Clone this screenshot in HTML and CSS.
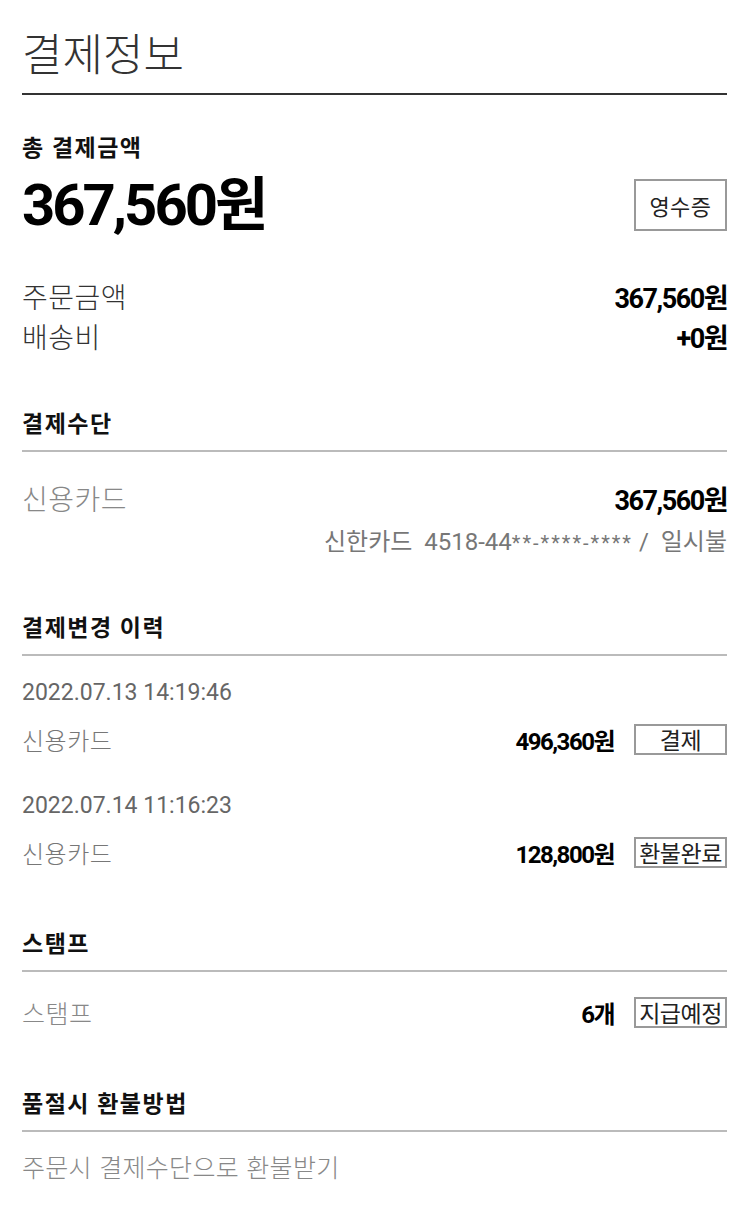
FILE: index.html
```html
<!DOCTYPE html>
<html lang="ko">
<head>
<meta charset="utf-8">
<link rel="stylesheet" href="styles.css">
</head>
<body>
<div class="page">
  <h1 class="title">결제정보</h1>

  <div class="total-label">총 결제금액</div>
  <div class="total-row">
    <div class="total-amount">367,560원</div>
    <div class="btn btn-lg">영수증</div>
  </div>

  <div class="row sum-row"><span class="label dark">주문금액</span><span class="amt">367,560원</span></div>
  <div class="row sum-row tight"><span class="label dark">배송비</span><span class="amt">+0원</span></div>

  <section class="section">
    <h2 class="sec-head">결제수단</h2>
    <div class="row pay-row"><span class="label">신용카드</span><span class="amt">367,560원</span></div>
    <div class="card-info">신한카드 &nbsp;4518-44<span class="mask">**-****-****</span> / &nbsp;일시불</div>
  </section>

  <section class="section">
    <h2 class="sec-head">결제변경 이력</h2>
    <div class="hist">
      <div class="date">2022.07.13 14:19:46</div>
      <div class="row hist-row"><span class="label mid">신용카드</span><span class="right"><span class="amt sm">496,360원</span><span class="btn btn-sm">결제</span></span></div>
    </div>
    <div class="hist">
      <div class="date">2022.07.14 11:16:23</div>
      <div class="row hist-row"><span class="label mid">신용카드</span><span class="right"><span class="amt sm">128,800원</span><span class="btn btn-sm">환불완료</span></span></div>
    </div>
  </section>

  <section class="section sec-stamp">
    <h2 class="sec-head">스탬프</h2>
    <div class="row stamp-row"><span class="label mid2">스탬프</span><span class="right"><span class="amt sm">6개</span><span class="btn btn-sm">지급예정</span></span></div>
  </section>

  <section class="section sec-refund">
    <h2 class="sec-head">품절시 환불방법</h2>
    <div class="refund">주문시 결제수단으로 환불받기</div>
  </section>
</div>
</body>
</html>
```

FILE: styles.css
```css
* { box-sizing: border-box; }
html, body { margin: 0; padding: 0; background: #fff; }
body {
  font-family: "Roboto", "Noto Sans CJK KR", sans-serif;
  color: #111;
}
.page {
  padding: 0 23px 0 22px;
  width: 750px;
}
.title {
  margin: 0;
  padding-top: 28px;
  padding-bottom: 9px;
  font-size: 44px;
  line-height: 56px;
  font-weight: 300;
  color: #333;
  border-bottom: 2px solid #333;
}
.total-label {
  margin-top: 39px;
  font-size: 23px;
  line-height: 30px;
  font-weight: 700;
  letter-spacing: 1.5px;
  color: #111;
}
.total-row {
  margin-top: 14px;
  display: flex;
  justify-content: space-between;
  align-items: center;
  height: 54px;
}
.total-amount {
  font-size: 58px;
  line-height: 54px;
  font-weight: 700;
  letter-spacing: -3px;
  color: #000;
}
.btn {
  display: flex;
  align-items: center;
  justify-content: center;
  border: 2px solid #999;
  background: #fff;
  color: #222;
  font-family: "Noto Sans CJK KR", sans-serif;
  font-weight: 400;
  white-space: nowrap;
}
.btn-lg {
  width: 93px;
  height: 52px;
  font-size: 22px;
  letter-spacing: 0.5px;
}
.btn-sm {
  width: 93px;
  height: 31px;
  font-size: 23px;
  line-height: 1;
  letter-spacing: -0.5px;
}
.row {
  display: flex;
  justify-content: space-between;
  align-items: center;
}
.sum-row {
  margin-top: 46px;
  height: 36px;
}
.sum-row.tight { margin-top: 4px; }
.label {
  font-family: "Noto Sans CJK KR", sans-serif;
  font-size: 28px;
  font-weight: 300;
  letter-spacing: 0.5px;
  color: #888;
}
.label.dark { color: #333; }
.label.mid { font-size: 24px; letter-spacing: 0.5px; color: #777; }
.label.mid2 { font-size: 25px; letter-spacing: 0.5px; color: #888; }
.amt {
  font-size: 27px;
  font-weight: 700;
  letter-spacing: -1.5px;
  color: #000;
}
.amt.sm {
  font-size: 24px;
  letter-spacing: -1.5px;
}
.right {
  display: flex;
  align-items: center;
  gap: 20px;
}
.section { margin-top: 56px; }
.sec-stamp { margin-top: 62px; }
.sec-refund { margin-top: 62px; }
.sec-head {
  margin: 0;
  font-size: 23px;
  line-height: 30px;
  font-weight: 700;
  letter-spacing: 1.5px;
  color: #111;
  padding-bottom: 10px;
  border-bottom: 2px solid #bbb;
}
.pay-row {
  margin-top: 29px;
  height: 34px;
}
.card-info {
  margin-top: 12px;
  text-align: right;
  font-size: 24px;
  line-height: 30px;
  color: #777;
  font-weight: 400;
}
.mask { font-size: 20px; letter-spacing: 2px; }
.hist { margin-top: 22px; }
.hist + .hist { margin-top: 36px; }
.date {
  font-size: 23px;
  line-height: 30px;
  color: #666;
}
.hist-row {
  margin-top: 15px;
  height: 32px;
}
.stamp-row {
  margin-top: 24px;
  height: 32px;
}
.refund {
  margin-top: 19px;
  font-family: "Noto Sans CJK KR", sans-serif;
  font-size: 25px;
  line-height: 30px;
  font-weight: 300;
  letter-spacing: 0.3px;
  color: #888;
}
```
